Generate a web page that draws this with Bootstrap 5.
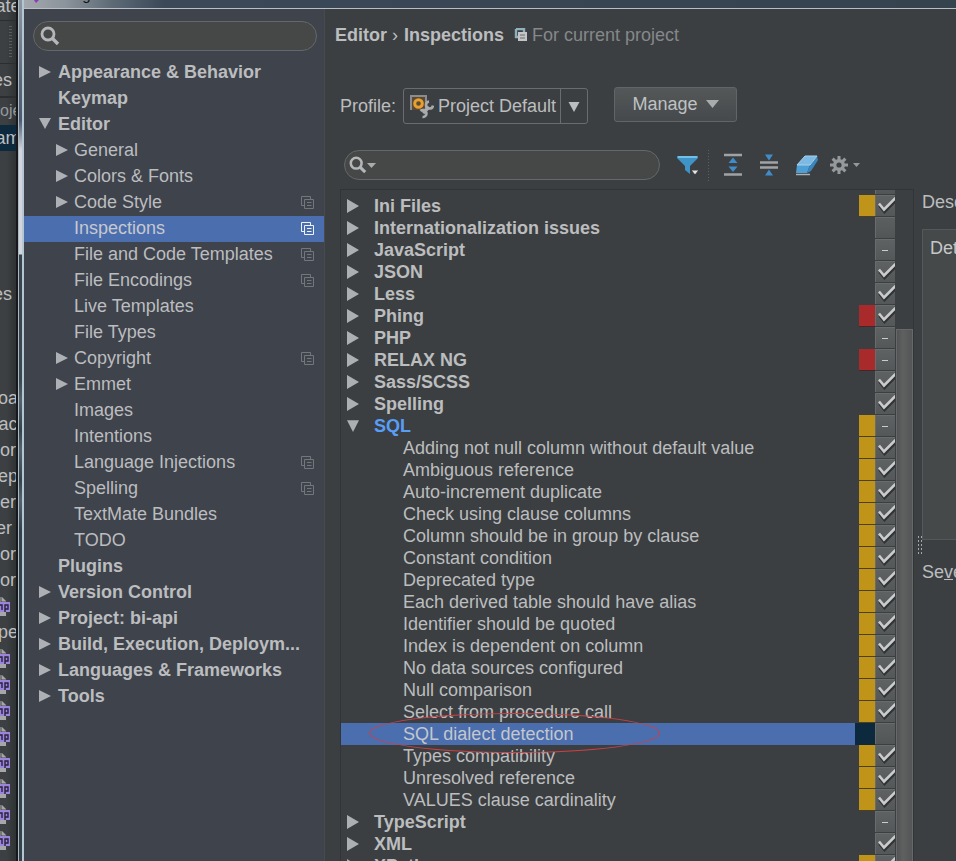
<!DOCTYPE html>
<html lang="en">
<head>
<meta charset="utf-8">
<meta name="viewport" content="width=device-width, initial-scale=1">
<title>Settings</title>
<link href="https://cdn.jsdelivr.net/npm/bootstrap@5.3.0/dist/css/bootstrap.min.css" rel="stylesheet">
<style>
body{font:18px/22px "Liberation Sans",Arial,sans-serif;background:#3c3f41;color:#bbbdbf}
svg{display:block;flex:none}
a{color:inherit;text-decoration:none}

/* editor window behind the dialog */
.behind{width:16px;flex:none;background:linear-gradient(90deg,#3d4042 40%,#303334);line-height:26px;white-space:nowrap}
.behind > div{height:26px;display:flex;overflow:hidden}
.behind .b-wide{justify-content:center}
.behind .b-top{height:21px;line-height:12px;border-bottom:1px solid #2b2d2e}
.behind .b-tools{height:43px;border-bottom:1px solid #2b2d2e;padding:5px 4px}
.behind .b-tools i{width:3px;margin-left:auto;background:repeating-linear-gradient(#5a5d5f 0 1px,transparent 1px 3px)}
.behind .b-path{height:34px;line-height:32px;border-bottom:2px solid #2b2d2e}
.behind .b-head{height:27px;color:#94979a;font-size:16px}
.behind .b-sel{background:#0d293e}
.behind .b-icon{align-items:center}
.behind .b-short{padding-right:4px;justify-content:flex-end}
.frame{width:8px;flex:none;border-left:2px solid #17191c;border-right:2px solid #b4c6d2;background:linear-gradient(90deg,#a9bac4 0 1px,transparent 1px),linear-gradient(#8f96a1 0,#5c6779 80px,#4c5a72 120px,#d3d5dc 150px,#d3d5dc 254px,#3a434c 255px,#3b474e 380px,#54646d 400px,#35434a 430px,#54646d 450px,#35434a 480px,#54646d 500px,#34414a 530px,#34424a 100%)}

/* dialog */
.titlebar{height:9px;flex:none;padding:0 0 5px 6px;background:linear-gradient(90deg,#a2a8ad 0,#8c949c 40px,#5c6975 90px,#3a4858 140px,#35434f 100%);border-bottom:1px solid #b9bec2;color:#111;font-size:15px;line-height:16px;overflow:hidden}
.side{width:300px;flex:none;background:#3f434c}
.search{background:#454847;border:1px solid #64686a;border-radius:15px;height:30px}
.search input{background:none;border:0;outline:0;color:inherit;min-width:0}
.side .search{margin:12px 7px 9px 9px;padding-left:6px}
.tree a{display:flex;align-items:center;height:26px;line-height:24px;padding:0 10px 2px 34px}
.tree .sub{padding-left:50px}
.tree .fold{margin-left:-20px;width:20px;padding-left:1px}
.tree .sub .fold{margin-left:-19px;width:19px}
.tree .cur{background:#4b6eaf;color:#c6c9ce}
.tree svg.proj{margin-left:auto;color:#73777c}
.tree .cur svg.proj{color:#eef2f8}
.fold svg{color:#adb0b5}

.main-pane{border-left:1px solid #484b4d;min-width:0}
.crumbs{height:54px;padding-left:10px}
.crumbs .chev{padding:0 6px 0 5px}
.faded{color:#85888a}
.profile{padding:25px 0 0 15px;height:63px}
.profile > label{margin-right:7px}
.combo{width:185px;height:36px;margin-top:1px;border:1px solid #6a6d6f;border-radius:3px}
.combo select{appearance:none;background:none;border:0;outline:0;color:inherit;padding:1px 0 0 4px;flex:1;min-width:0}
.combo .drop{width:27px;border-left:1px solid #6a6d6f;padding-top:4px}
.manage{width:123px;height:35px;margin-left:26px;border:1px solid #626567;border-radius:3px;background:linear-gradient(#555859,#46494b);color:#bfc1c3;padding:0}
.tools{height:32px;margin:26px 0 8px 19px}
.tools .search{width:316px}
.tools button{border:0;background:none;padding:0}
.tools .sep{width:1px;align-self:stretch;margin:0 14px 0 8px;background:repeating-linear-gradient(#5d6062 0 1px,transparent 1px 3px)}
.tools .gear{margin-left:10px}

.insp{margin-left:15px;border:1px solid #323537;border-bottom:0;min-width:0;overflow:hidden}
.rows{min-width:0;overflow:hidden}
.rows label{display:flex;height:22px;flex:none;align-items:stretch;position:relative}
.rows .partial{height:5px;align-items:flex-end;overflow:hidden}
.rows .txt{flex:1;min-width:0;margin-right:4px;padding-left:62px;white-space:nowrap;overflow:hidden}
.rows .group .txt{font-weight:700;padding-left:33px}
.rows .group::before{content:"";flex:none;width:12px;height:14px;margin:4px -18px 0 6px;background:#adb0b2;clip-path:polygon(0 0,100% 50%,0 100%)}
.rows .open::before{clip-path:polygon(0 8%,100% 8%,50% 92%)}
.rows .open .txt{color:#589df6}
.sev{width:16px;flex:none;border-bottom:1px solid #4b401f}
.sev:not(.warn):not(.err){border:0}
.warn{background:#c09419}
.err{background:#a82a2a;border-color:#4a2527}
.rows input{appearance:none;flex:none;width:20px;height:21px;margin:0 1px 1px 0;border:1px solid #696c6d;border-width:1px 0 0 1px;background:linear-gradient(#5c5f60,#535657)}
.rows input:checked{background:url("data:image/svg+xml,%3Csvg xmlns='http://www.w3.org/2000/svg' width='20' height='21' fill='none' stroke-width='2.6'%3E%3Cpath d='M3.500 10l5 6L20 4.500' stroke='%23303233'/%3E%3Cpath d='M3 7.500l5 6L19.500 2' stroke='%23c9cbcc'/%3E%3C/svg%3E") 0 0 no-repeat,linear-gradient(#5f6263,#555859)}
.rows input:indeterminate{background:linear-gradient(#c9cbcc,#c9cbcc) 6px 10px/6px 1px no-repeat,linear-gradient(#5f6263,#555859)}
.rows .cur .txt{background:#4b6eaf;margin-right:0;color:#c3c7cd}
.rows .cur .sev{width:20px;background:#0d293e}
.rows .cur{z-index:1}
.ring{position:absolute;left:28px;top:-10px;width:291px;height:40px;border:1px solid #cb4046;border-radius:50%}
.scroll{width:17px;flex:none;padding-top:139px}
.thumb{background:linear-gradient(90deg,#515354,#5f6161 40%,#535556);height:100%;border:1px solid #666869;border-bottom:0}
.splitter{width:8px;flex:none;padding:346px 0 0 3px}
.splitter i{display:block;width:5px;height:20px;background:radial-gradient(circle,#a5a8aa 0 1px,transparent 1px) 0 0/3px 4px}
.desc{width:34px;flex:none;overflow:hidden;white-space:nowrap;padding-top:2px}
.desc .box{height:311px;margin:16px 0 21px;padding:7px;border:1px solid #55585a;border-right:0;background:#45494a;color:#c6c8c9}
</style>
<script src="https://cdn.jsdelivr.net/npm/bootstrap@5.3.0/dist/js/bootstrap.bundle.min.js"></script>
</head>
<body class="d-flex vh-100 overflow-hidden">

<svg width="0" height="0" class="position-absolute" aria-hidden="true">
  <symbol id="right" viewBox="0 0 12 14"><path d="M0 1l12 6-12 6z" fill="currentColor"/></symbol>
  <symbol id="down" viewBox="0 0 12 12"><path d="M0 0h12L6 11z" fill="currentColor"/></symbol>
  <symbol id="proj" viewBox="0 0 13 13"><path d="M3.500 9.500h-3v-9h9v3M3.500 3.500h9v9h-9zM6 6.500h4.500M6 9.500h4.500" fill="none" stroke="currentColor"/></symbol>
  <symbol id="lens" viewBox="0 0 20 20"><circle cx="8" cy="8" r="6" fill="none" stroke="#b4b7b9" stroke-width="2.800"/><path d="M12 12l6 6" stroke="#b4b7b9" stroke-width="3.400"/></symbol>
  <symbol id="php" viewBox="0 0 11 22"><path d="M0 2h2l4 4v15H0z" fill="#a5a7a8"/><path d="M1 2v5h5" fill="none" stroke="#46494b"/><rect y="7" width="10" height="10" fill="#9c83dc"/><path d="M0 10h2v5M5 17v-7h3v4H5" fill="none" stroke="#26223a" stroke-width="1.400"/></symbol>
</svg>

<aside class="behind overflow-hidden" aria-hidden="true">
  <div class="b-top b-wide">ate</div>
  <div class="b-tools"><i></i></div>
  <div class="b-path b-short">es</div>
  <div class="b-head">oje</div>
  <div class="b-sel b-wide">am</div>
  <div></div><div></div><div></div><div></div><div></div>
  <div class="b-short">es</div>
  <div></div><div></div><div></div>
  <div class="b-wide">oa</div><div class="b-wide">ac</div><div>or</div><div class="b-wide">ep</div><div>er</div><div class="b-short">er</div><div>or</div><div>or</div>
  <div class="b-icon"><svg width="11" height="22"><use href="#php"/></svg></div>
  <div class="b-wide">pe</div>
  <div class="b-icon"><svg width="11" height="22"><use href="#php"/></svg></div>
  <div class="b-icon"><svg width="11" height="22"><use href="#php"/></svg></div>
  <div class="b-icon"><svg width="11" height="22"><use href="#php"/></svg></div>
  <div class="b-icon"><svg width="11" height="22"><use href="#php"/></svg></div>
  <div class="b-icon"><svg width="11" height="22"><use href="#php"/></svg></div>
  <div class="b-icon"><svg width="11" height="22"><use href="#php"/></svg></div>
  <div class="b-icon"><svg width="11" height="22"><use href="#php"/></svg></div>
  <div class="b-icon"><svg width="11" height="22"><use href="#php"/></svg></div>
</aside>
<div class="frame"></div>

<div class="d-flex flex-column flex-grow-1 overflow-hidden">
  <header class="titlebar d-flex align-items-end">
    <svg width="14" height="12" viewBox="0 0 14 12"><path d="M2 6h10l-6 6z" fill="#8d3bb5"/></svg>
    <span>Settings</span>
  </header>

  <div class="d-flex flex-grow-1 overflow-hidden">
    <nav class="side" aria-label="Settings sections">
      <div class="search d-flex align-items-center">
        <svg width="20" height="20"><use href="#lens"/></svg>
        <input class="flex-grow-1 ms-2" type="text" aria-label="Search settings">
      </div>
      <div class="tree">
        <a href="#" class="fw-bold"><span class="fold"><svg width="12" height="14"><use href="#right"/></svg></span>Appearance &amp; Behavior</a>
        <a href="#" class="fw-bold">Keymap</a>
        <a href="#" class="fw-bold"><span class="fold"><svg width="12" height="12"><use href="#down"/></svg></span>Editor</a>
        <a href="#" class="sub"><span class="fold"><svg width="12" height="14"><use href="#right"/></svg></span>General</a>
        <a href="#" class="sub"><span class="fold"><svg width="12" height="14"><use href="#right"/></svg></span>Colors &amp; Fonts</a>
        <a href="#" class="sub"><span class="fold"><svg width="12" height="14"><use href="#right"/></svg></span>Code Style<svg class="proj" width="13" height="13"><use href="#proj"/></svg></a>
        <a href="#" class="sub cur" aria-current="page">Inspections<svg class="proj" width="13" height="13"><use href="#proj"/></svg></a>
        <a href="#" class="sub">File and Code Templates<svg class="proj" width="13" height="13"><use href="#proj"/></svg></a>
        <a href="#" class="sub">File Encodings<svg class="proj" width="13" height="13"><use href="#proj"/></svg></a>
        <a href="#" class="sub">Live Templates</a>
        <a href="#" class="sub">File Types</a>
        <a href="#" class="sub"><span class="fold"><svg width="12" height="14"><use href="#right"/></svg></span>Copyright<svg class="proj" width="13" height="13"><use href="#proj"/></svg></a>
        <a href="#" class="sub"><span class="fold"><svg width="12" height="14"><use href="#right"/></svg></span>Emmet</a>
        <a href="#" class="sub">Images</a>
        <a href="#" class="sub">Intentions</a>
        <a href="#" class="sub">Language Injections<svg class="proj" width="13" height="13"><use href="#proj"/></svg></a>
        <a href="#" class="sub">Spelling<svg class="proj" width="13" height="13"><use href="#proj"/></svg></a>
        <a href="#" class="sub">TextMate Bundles</a>
        <a href="#" class="sub">TODO</a>
        <a href="#" class="fw-bold">Plugins</a>
        <a href="#" class="fw-bold"><span class="fold"><svg width="12" height="14"><use href="#right"/></svg></span>Version Control</a>
        <a href="#" class="fw-bold"><span class="fold"><svg width="12" height="14"><use href="#right"/></svg></span>Project: bi-api</a>
        <a href="#" class="fw-bold"><span class="fold"><svg width="12" height="14"><use href="#right"/></svg></span>Build, Execution, Deploym...</a>
        <a href="#" class="fw-bold"><span class="fold"><svg width="12" height="14"><use href="#right"/></svg></span>Languages &amp; Frameworks</a>
        <a href="#" class="fw-bold"><span class="fold"><svg width="12" height="14"><use href="#right"/></svg></span>Tools</a>
      </div>
    </nav>

    <main class="main-pane d-flex flex-column flex-grow-1">
      <div class="crumbs d-flex align-items-center">
        <strong>Editor</strong><span class="chev">›</span><strong>Inspections</strong>
        <svg class="ms-2 me-1" width="16" height="14" viewBox="0 0 16 14"><path d="M4 1h8v3M4 1v8h3" fill="none" stroke="#8fb0bd" stroke-width="2.400"/><rect x="6" y="4" width="9" height="9" fill="#c3c5c6"/><path d="M8 7h5M8 10h5" stroke="#6b6e70"/></svg>
        <span class="faded">For current project</span>
      </div>

      <div class="profile d-flex align-items-start">
        <label for="profile" class="pt-2">Profile:</label>
        <div class="combo d-flex align-items-stretch">
          <svg class="align-self-center ms-1" width="26" height="26" viewBox="0 0 26 26"><rect x="2" y="2" width="17" height="15" fill="#8b8b90"/><rect x="4" y="4" width="13" height="13" fill="#5a4a35"/><circle cx="10.500" cy="10.500" r="3.800" fill="none" stroke="#e9a02c" stroke-width="3"/><path d="M15 20l6-6" stroke="#a9abad" stroke-width="3.600"/><path d="M21 8.500a3.500 3.500 0 1 0 4 4M12.500 18a3.500 3.500 0 1 1 2 6" fill="none" stroke="#a9abad" stroke-width="2.600"/></svg>
          <select id="profile"><option>Project Default</option></select>
          <span class="drop d-flex align-items-center justify-content-center"><svg width="12" height="11"><use href="#down"/></svg></span>
        </div>
        <button type="button" class="manage d-flex align-items-center justify-content-center gap-2">Manage<svg width="13" height="8" viewBox="0 0 13 8"><path d="M0 0h13L6.500 8z" fill="#a9acae"/></svg></button>
      </div>

      <div class="tools d-flex align-items-center">
        <div class="search d-flex align-items-center ps-1">
          <svg width="18" height="20"><use href="#lens"/></svg>
          <svg width="9" height="5" viewBox="0 0 9 5"><path d="M0 0h9L4.500 5z" fill="#a9acae"/></svg>
          <input class="flex-grow-1 ms-2" type="text" aria-label="Search inspections">
        </div>
        <button type="button" class="ms-3" aria-label="Filter inspections"><svg width="24" height="24" viewBox="0 0 24 24"><path d="M1 3h21v2l-8 8v8l-5-4v-4L1 5z" fill="#3f93c6"/><path d="M2 4h19" stroke="#72bfe6" stroke-width="2"/><path d="M15 17h8l-4 5z" fill="#e4e5e6" stroke="#3c3f41"/></svg></button>
        <span class="sep"></span>
        <button type="button" aria-label="Expand all"><svg width="20" height="24" viewBox="0 0 20 24"><path d="M1 2h18M1 21.500h18" stroke="#a0a3a5" stroke-width="2.600"/><path d="M10 4.500l4.500 5.500h-9zM10 19l4.500-5.500h-9z" fill="#3f8cc9"/></svg></button>
        <button type="button" class="ms-3" aria-label="Collapse all"><svg width="20" height="24" viewBox="0 0 20 24"><path d="M1 9.500h18M1 14.500h18" stroke="#a0a3a5" stroke-width="2.600"/><path d="M10 7.500l4-6H6zM10 16.500l4 6H6z" fill="#3f8cc9"/></svg></button>
        <button type="button" class="ms-3" aria-label="Reset to empty"><svg width="24" height="24" viewBox="0 0 24 24"><path d="M10 3h12l-7 9H2z" fill="#7db9e2"/><path d="M2 12h13l-3 8H1z" fill="#4d9fd4"/><path d="M15 12l7-9 1 4-7 11-4 2z" fill="#3a86bd"/><path d="M2 12h13l7-9H10z" fill="none" stroke="#a5d2ee"/><path d="M1 21.500h14" stroke="#aeb1b3" stroke-width="1.500"/></svg></button>
        <button type="button" class="gear d-flex align-items-center gap-1" aria-label="Options"><svg width="20" height="22" viewBox="-10 -11 20 22"><g stroke="#96999b" stroke-width="3"><path d="M0-9V9M-9 0H9M-6.400-6.400L6.400 6.400M6.400-6.400L-6.400 6.400"/></g><circle r="6" fill="#96999b"/><circle r="2.600" fill="#3c3f41"/></svg><svg width="7" height="4" viewBox="0 0 7 4"><path d="M0 0h7L3.500 4z" fill="#96999b"/></svg></button>
      </div>

      <div class="d-flex flex-grow-1 overflow-hidden">
        <div class="insp d-flex flex-grow-1">
          <div class="rows d-flex flex-column flex-grow-1">
            <label class="partial"><span class="txt"></span><i class="sev"></i><input type="checkbox" aria-label="HTML"></label>
            <label class="group"><span class="txt">Ini Files</span><i class="sev warn"></i><input type="checkbox" checked></label>
            <label class="group"><span class="txt">Internationalization issues</span><i class="sev"></i><input type="checkbox"></label>
            <label class="group"><span class="txt">JavaScript</span><i class="sev"></i><input type="checkbox" data-mixed></label>
            <label class="group"><span class="txt">JSON</span><i class="sev"></i><input type="checkbox" checked></label>
            <label class="group"><span class="txt">Less</span><i class="sev"></i><input type="checkbox" checked></label>
            <label class="group"><span class="txt">Phing</span><i class="sev err"></i><input type="checkbox" checked></label>
            <label class="group"><span class="txt">PHP</span><i class="sev"></i><input type="checkbox" data-mixed></label>
            <label class="group"><span class="txt">RELAX NG</span><i class="sev err"></i><input type="checkbox" data-mixed></label>
            <label class="group"><span class="txt">Sass/SCSS</span><i class="sev"></i><input type="checkbox" checked></label>
            <label class="group"><span class="txt">Spelling</span><i class="sev"></i><input type="checkbox" checked></label>
            <label class="group open"><span class="txt">SQL</span><i class="sev warn"></i><input type="checkbox" data-mixed></label>
            <label><span class="txt">Adding not null column without default value</span><i class="sev warn"></i><input type="checkbox" checked></label>
            <label><span class="txt">Ambiguous reference</span><i class="sev warn"></i><input type="checkbox" checked></label>
            <label><span class="txt">Auto-increment duplicate</span><i class="sev warn"></i><input type="checkbox" checked></label>
            <label><span class="txt">Check using clause columns</span><i class="sev warn"></i><input type="checkbox" checked></label>
            <label><span class="txt">Column should be in group by clause</span><i class="sev warn"></i><input type="checkbox" checked></label>
            <label><span class="txt">Constant condition</span><i class="sev warn"></i><input type="checkbox" checked></label>
            <label><span class="txt">Deprecated type</span><i class="sev warn"></i><input type="checkbox" checked></label>
            <label><span class="txt">Each derived table should have alias</span><i class="sev warn"></i><input type="checkbox" checked></label>
            <label><span class="txt">Identifier should be quoted</span><i class="sev warn"></i><input type="checkbox" checked></label>
            <label><span class="txt">Index is dependent on column</span><i class="sev warn"></i><input type="checkbox" checked></label>
            <label><span class="txt">No data sources configured</span><i class="sev warn"></i><input type="checkbox" checked></label>
            <label><span class="txt">Null comparison</span><i class="sev warn"></i><input type="checkbox" checked></label>
            <label><span class="txt">Select from procedure call</span><i class="sev warn"></i><input type="checkbox" checked></label>
            <label class="cur"><span class="txt">SQL dialect detection</span><i class="sev"></i><input type="checkbox"><span class="ring"></span></label>
            <label><span class="txt">Types compatibility</span><i class="sev warn"></i><input type="checkbox" checked></label>
            <label><span class="txt">Unresolved reference</span><i class="sev warn"></i><input type="checkbox" checked></label>
            <label><span class="txt">VALUES clause cardinality</span><i class="sev warn"></i><input type="checkbox" checked></label>
            <label class="group"><span class="txt">TypeScript</span><i class="sev"></i><input type="checkbox" data-mixed></label>
            <label class="group"><span class="txt">XML</span><i class="sev"></i><input type="checkbox" checked></label>
            <label class="group"><span class="txt">XPath</span><i class="sev warn"></i><input type="checkbox" checked></label>
          </div>
          <div class="scroll"><div class="thumb"></div></div>
        </div>
        <div class="splitter"><i></i></div>
        <section class="desc">
          <div>Desc</div>
          <div class="box">Det</div>
          <div>Se<u>v</u>e</div>
        </section>
      </div>
    </main>
  </div>
</div>

<script>
document.querySelectorAll('[data-mixed]').forEach(function (box) { box.indeterminate = true; });
</script>
</body>
</html>
